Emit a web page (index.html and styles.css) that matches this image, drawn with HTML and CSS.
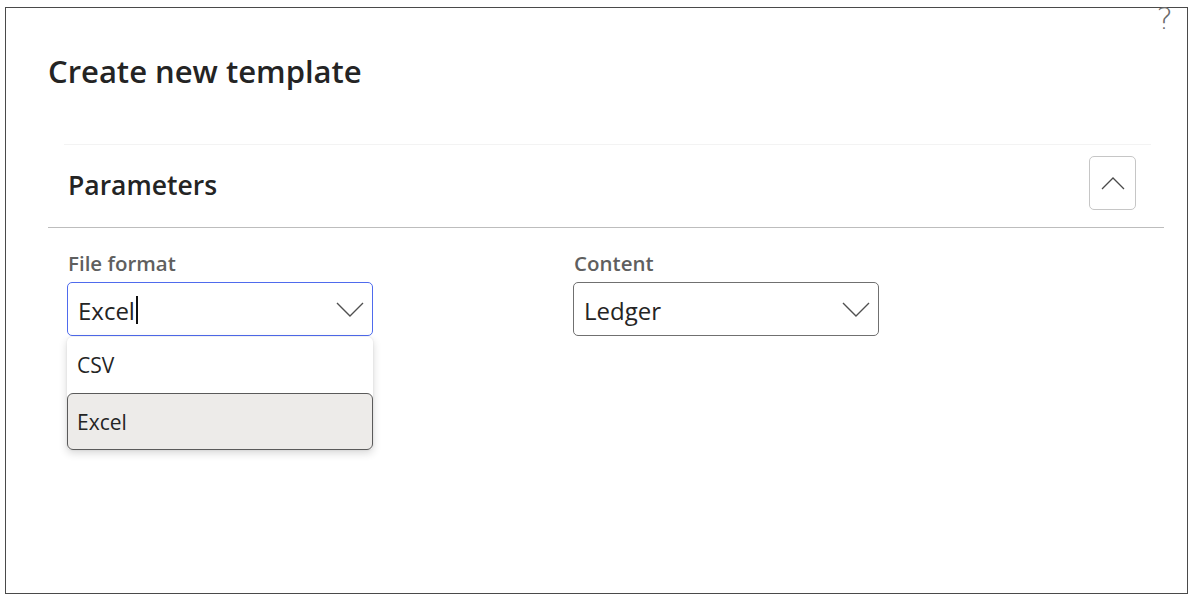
FILE: index.html
```html
<!DOCTYPE html>
<html lang="en">
<head>
<meta charset="utf-8">
<title>Create new template</title>
<link rel="stylesheet" href="styles.css">
</head>
<body>
<div class="frame">
  <span class="help">?</span>
  <h1 class="title">Create new template</h1>
  <div class="section">
    <div class="section-head">
      <h2 class="section-title">Parameters</h2>
      <button class="collapse" aria-label="Collapse">
        <svg width="24" height="13" viewBox="0 0 24 13"><path d="M1 12 L12 1 L23 12" fill="none" stroke="#4a4a4a" stroke-width="1.3"/></svg>
      </button>
    </div>
  </div>
  <div class="divider"></div>
  <div class="fields">
    <div class="field">
      <label class="label">File format</label>
      <div class="combo focused">
        <span class="value">Excel<span class="caret"></span></span>
        <svg class="chev" width="28" height="15" viewBox="0 0 28 15"><path d="M1 1 L14 14 L27 1" fill="none" stroke="#505050" stroke-width="1.4"/></svg>
      </div>
      <div class="menu">
        <div class="option">CSV</div>
        <div class="option selected">Excel</div>
      </div>
    </div>
    <div class="field">
      <label class="label">Content</label>
      <div class="combo">
        <span class="value">Ledger</span>
        <svg class="chev" width="28" height="15" viewBox="0 0 28 15"><path d="M1 1 L14 14 L27 1" fill="none" stroke="#505050" stroke-width="1.4"/></svg>
      </div>
    </div>
  </div>
</div>
</body>
</html>
```
FILE: styles.css
```css
html, body {
  margin: 0;
  padding: 0;
  background: #ffffff;
}
body {
  font-family: "Open Sans", "Noto Sans", sans-serif;
  color: #242424;
}
.frame {
  position: relative;
  box-sizing: border-box;
  margin: 7px 0 0 5px;
  width: 1183px;
  height: 587px;
  border: 1px solid #4a4a4a;
}
.help {
  position: absolute;
  right: 14px;
  top: -8px;
  font-family: "DejaVu Sans", sans-serif;
  font-size: 31px;
  font-weight: 200;
  color: #6a6a6a;
  line-height: normal;
}
.title {
  margin: 43px 0 0 42px;
  font-size: 31px;
  font-weight: 600;
  line-height: 40px;
  color: #242424;
}
.section {
  margin: 53px 36px 0 58px;
  border-top: 1px solid #f3f3f3;
}
.section-head {
  display: flex;
  align-items: center;
  justify-content: space-between;
  padding: 11px 15px 17px 4px;
}
.section-title {
  margin: 4px 0 0 0;
  font-size: 26.5px;
  font-weight: 600;
  line-height: 34px;
  color: #242424;
}
.collapse {
  box-sizing: border-box;
  width: 47px;
  height: 54px;
  border: 1px solid #c6c6c6;
  border-radius: 5px;
  background: #ffffff;
  display: flex;
  align-items: center;
  justify-content: center;
  padding: 0;
}
.divider {
  margin: 0 23px 0 42px;
  border-top: 1px solid #bdbdbd;
}
.fields {
  display: flex;
  gap: 200px;
  padding: 22px 0 0 61px;
}
.field {
  position: relative;
  width: 306px;
}
.label {
  display: block;
  font-size: 20.5px;
  font-weight: 600;
  color: #5f5f5f;
  line-height: 26px;
  margin-bottom: 6px;
  padding-left: 1px;
}
.combo {
  box-sizing: border-box;
  height: 54px;
  border: 1px solid #707070;
  border-radius: 5px;
  display: flex;
  align-items: center;
  justify-content: space-between;
  padding: 2px 8px 0 10px;
}
.combo.focused {
  border-color: #4f6bed;
}
.value {
  font-size: 24px;
  color: #242424;
  display: flex;
  align-items: center;
}
.caret {
  display: inline-block;
  width: 2px;
  height: 28px;
  background: #111;
  margin-left: 1px;
}
.chev {
  margin-top: -2px;
}
.menu {
  position: absolute;
  left: 0;
  top: 87px;
  width: 306px;
  background: #ffffff;
  border-radius: 5px;
  box-shadow: 0 3px 8px rgba(0,0,0,0.16), 0 0 2px rgba(0,0,0,0.10);
  box-sizing: border-box;
}
.option {
  box-sizing: border-box;
  height: 56px;
  display: flex;
  align-items: center;
  padding-left: 10px;
  font-size: 21px;
  color: #242424;
}
.option.selected {
  height: 57px;
  background: #edebe9;
  border: 1px solid #5a5a5a;
  border-radius: 6px;
  padding-left: 9px;
}
```
